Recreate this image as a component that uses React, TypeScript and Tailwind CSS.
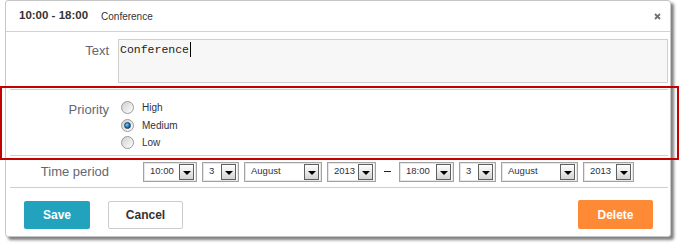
import React from 'react';

const Select = ({ value, width }: { value: string; width: string }) => (
  <div
    className={`${width} h-[20px] flex items-center justify-between border border-[#a3a3a3] bg-white pl-[6px] pr-[2px] shadow-[inset_0_0_0_1px_#e6e6e6]`}
  >
    <span className="text-[9.5px] text-[#2f2f3f]">{value}</span>
    <div className="w-[15px] h-[16px] border border-[#5f5f5f] bg-gradient-to-b from-white to-[#d4d4d4] flex items-end justify-center pb-[4px]">
      <div className="w-0 h-0 border-l-[4px] border-r-[4px] border-t-[4px] border-l-transparent border-r-transparent border-t-black" />
    </div>
  </div>
);

const Radio = ({ label, checked }: { label: string; checked?: boolean }) => (
  <div className="h-[17.5px] flex items-center">
    <div className="w-[13px] h-[13px] rounded-full border border-[#9a9a9a] bg-gradient-to-br from-[#cfcfcf] to-white flex items-center justify-center">
      {checked && (
        <div className="w-[7px] h-[7px] rounded-full border border-[#1d3f5e] bg-[radial-gradient(circle_at_35%_35%,#7fd0f5,#1277b8_55%,#0a3f6b)]" />
      )}
    </div>
    <span className="ml-[8px] text-[10px] text-[#2f2f45]">{label}</span>
  </div>
);

const Label = ({ text, className = '' }: { text: string; className?: string }) => (
  <div className={`w-[103px] shrink-0 text-right text-[13px] text-[#666670] ${className}`}>{text}</div>
);

export default function App() {
  return (
    <div className="relative w-[683px] h-[245px] bg-white pl-[5px] font-['Liberation_Sans',Arial,sans-serif]">
      <div className="w-[666px] h-[237px] flex flex-col rounded-[3px] border border-[#c6c6c6] bg-white shadow-[3px_3px_3px_rgba(0,0,0,0.5)]">
        {/* header */}
        <div className="h-[31px] shrink-0 flex items-center border-b border-[#d2d2d2] pl-[13px] pr-[9px]">
          <span className="text-[11.5px] font-bold text-[#333]">10:00 - 18:00</span>
          <span className="ml-[13px] text-[10px] text-[#333]">Conference</span>
          <svg className="ml-auto" width="7" height="7" viewBox="0 0 7 7">
            <path d="M1 1L6 6M6 1L1 6" stroke="#707070" strokeWidth="1.8" />
          </svg>
        </div>

        {/* text row */}
        <div className="flex mt-[7px] mr-[2px]">
          <Label text="Text" className="pt-[2px]" />
          <div className="ml-[9px] flex-1 h-[44px] border border-[#cfcfcf] bg-[#f7f7f7] pl-[1px] pt-[2px] flex items-start">
            <span className="font-['Liberation_Mono',monospace] text-[11.5px] leading-[16px] text-[#222]">Conference</span>
            <span className="w-px h-[15px] bg-black ml-px" />
          </div>
        </div>

        <div className="mt-[6px] ml-[4px] mr-[2px] border-t border-[#cfcfcf]" />

        {/* priority */}
        <div className="h-[65px] flex pt-[9px]">
          <Label text="Priority" className="pt-[1px]" />
          <div className="ml-[12px] flex flex-col">
            <Radio label="High" />
            <Radio label="Medium" checked />
            <Radio label="Low" />
          </div>
        </div>

        <div className="ml-[4px] mr-[2px] border-t border-[#cfcfcf]" />

        {/* time period */}
        <div className="h-[31px] flex items-center">
          <Label text="Time period" />
          <div className="ml-[34px] flex items-center gap-[5px]">
            <Select value="10:00" width="w-[54px]" />
            <Select value="3" width="w-[37px]" />
            <Select value="August" width="w-[78px]" />
            <Select value="2013" width="w-[49px]" />
            <span className="mx-[3px] w-[7px] border-t border-[#222]" />
            <Select value="18:00" width="w-[55px]" />
            <Select value="3" width="w-[37px]" />
            <Select value="August" width="w-[77px]" />
            <Select value="2013" width="w-[51px]" />
          </div>
        </div>

        <div className="ml-[4px] mr-[2px] border-t border-[#cfcfcf]" />

        {/* buttons */}
        <div className="flex items-center pt-[12px] pl-[18px] pr-[17px]">
          <button className="w-[66px] h-[28px] rounded-[2px] bg-[#23a2bd] text-[12px] font-bold text-white">Save</button>
          <button className="ml-[18px] w-[75px] h-[28px] rounded-[2px] border border-[#cccccc] bg-white text-[12px] font-bold text-[#333]">
            Cancel
          </button>
          <button className="ml-auto w-[75px] h-[29px] rounded-[2px] bg-[#fe8a35] text-[12px] font-bold text-white">Delete</button>
        </div>
      </div>

      {/* annotation highlight */}
      <div className="absolute left-0 top-[86px] w-[679px] h-[74px] border-2 border-[#c40000]" />
    </div>
  );
}
